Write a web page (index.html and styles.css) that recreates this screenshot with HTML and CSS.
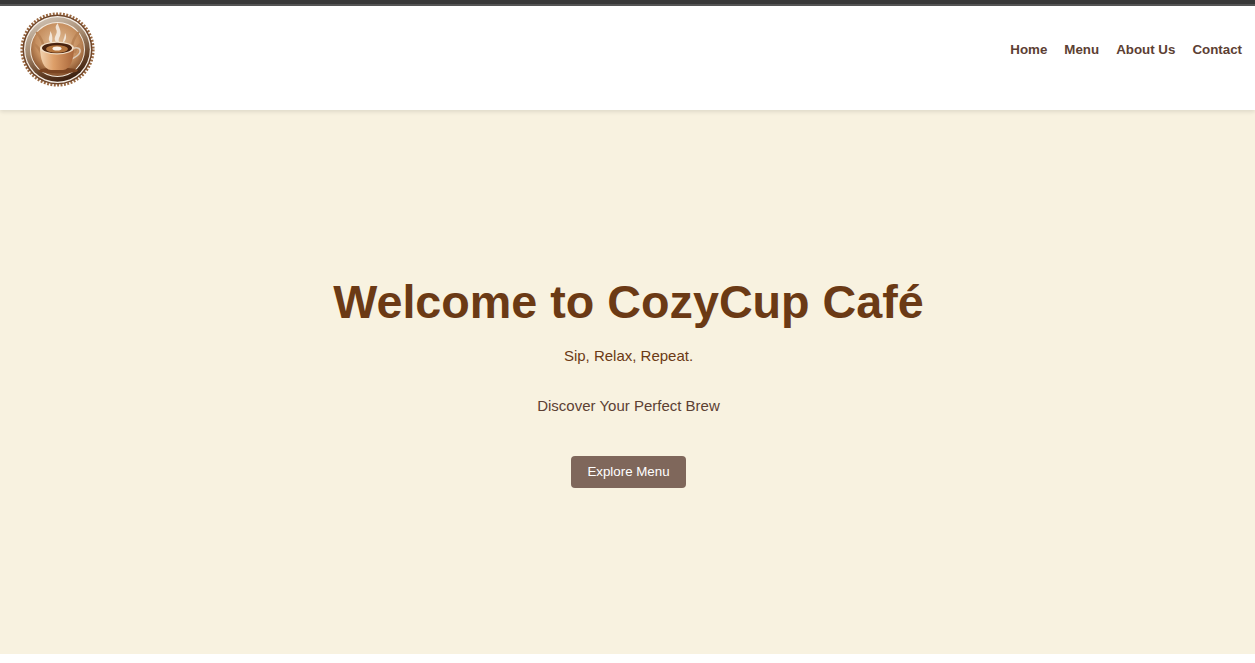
FILE: index.html
```html
<!DOCTYPE html>
<html lang="en">
<head>
<meta charset="utf-8">
<title>CozyCup Café</title>
<link rel="stylesheet" href="styles.css">
</head>
<body>
<div class="topbar"></div>
<header class="site-header">
  <a class="logo" href="#" aria-label="CozyCup Café">
    <svg viewBox="0 0 80 80" width="80" height="80" aria-hidden="true">
      <defs>
        <radialGradient id="bg" cx="50%" cy="40%" r="62%">
          <stop offset="0" stop-color="#e3c09a"/>
          <stop offset="0.65" stop-color="#c68f5f"/>
          <stop offset="1" stop-color="#7d4a27"/>
        </radialGradient>
        <linearGradient id="ring" x1="0.2" y1="0" x2="0.6" y2="1">
          <stop offset="0" stop-color="#d2c6b8"/>
          <stop offset="0.45" stop-color="#a2866b"/>
          <stop offset="0.75" stop-color="#6a452a"/>
          <stop offset="1" stop-color="#3a1f0f"/>
        </linearGradient>
        <linearGradient id="cup" x1="0" y1="0" x2="1" y2="0">
          <stop offset="0" stop-color="#f2d3b0"/>
          <stop offset="0.4" stop-color="#dd9f69"/>
          <stop offset="1" stop-color="#a9663a"/>
        </linearGradient>
      </defs>
      <circle cx="40.500" cy="40.500" r="35.700" fill="none" stroke="#9a6840" stroke-width="2.800" stroke-dasharray="1.900 1.500"/>
      <circle cx="40.500" cy="40.500" r="35" fill="#6e452a"/>
      <circle cx="40.500" cy="40.500" r="33.500" fill="#f6f0e8"/>
      <circle cx="40.500" cy="40.500" r="32.300" fill="url(#ring)"/>
      <circle cx="40.500" cy="40.500" r="27.500" fill="#f3e9dc"/>
      <circle cx="40.500" cy="40.500" r="26.500" fill="url(#bg)"/>
      <path d="M20 24q6 7 7 16M17 35q6 4 8 11M61 24q-5 6-6 13M65 34q-5 3-7 9" fill="none" stroke="#b98355" stroke-width="2.600" stroke-linecap="round"/>
      <ellipse cx="41" cy="61.500" rx="20" ry="3" fill="#7a4421"/>
      <path d="M39 33c-4-5 3-8 0-13c-1-2 0-4 2-6c0 4 4 7 2 13c-1 2-2 4-1 6zM33 33c-3-4 1-7 0-11c2 2 3 7 2 11zM46 33c0-3 2-5 2-9c2 3 1 7-1 9z" fill="#f6efe6" opacity="0.85"/>
      <path d="M54 41c3-3 8-3 9 0c1 4-5 8-11 10" fill="none" stroke="#dccbb8" stroke-width="1.600"/>
      <path d="M23 39h34c0 11-4 22-11 22h-12c-7 0-11-11-11-22z" fill="url(#cup)"/>
      <ellipse cx="40" cy="39" rx="17" ry="6.500" fill="#f3dfc6"/>
      <ellipse cx="40" cy="39" rx="15" ry="5.300" fill="#4a2410"/>
      <ellipse cx="40" cy="40" rx="11" ry="3.800" fill="#b5763f"/>
      <ellipse cx="40" cy="39.500" rx="4.500" ry="2" fill="#fbf1e6"/>
    </svg>
  </a>
  <nav class="main-nav">
    <a href="#">Home</a>
    <a href="#">Menu</a>
    <a href="#">About Us</a>
    <a href="#">Contact</a>
  </nav>
</header>
<main class="hero">
  <h1>Welcome to CozyCup Café</h1>
  <p class="tagline">Sip, Relax, Repeat.</p>
  <p class="subline">Discover Your Perfect Brew</p>
  <a class="cta" href="#">Explore Menu</a>
</main>
</body>
</html>
```
FILE: styles.css
```css
* {
  box-sizing: border-box;
}

html,
body {
  margin: 0;
  padding: 0;
  background: #fff;
}

body {
  font-family: "Liberation Sans", Arial, sans-serif;
  color: #5c4033;
}

.topbar {
  height: 6px;
  background: linear-gradient(#383838 0 4px, #555 4px 6px);
}

.site-header {
  height: 104px;
  padding: 0 13px 18px 17px;
  display: flex;
  justify-content: space-between;
  align-items: center;
  background: #fff;
  box-shadow: 0 2px 4px rgba(0, 0, 0, 0.1);
  position: relative;
}

.logo {
  display: block;
  width: 80px;
  height: 80px;
}

.logo svg {
  display: block;
}

.main-nav {
  display: flex;
  gap: 17px;
}

.main-nav a {
  font-size: 13.330px;
  font-weight: 700;
  color: #5c4033;
  text-decoration: none;
}

.hero {
  height: 544px;
  background: #f8f2e0;
  display: flex;
  flex-direction: column;
  align-items: center;
  justify-content: center;
  text-align: center;
  padding: 0 0 2px 2px;
}

.hero h1 {
  margin: 0 0 17px;
  font-size: 46.700px;
  line-height: 55px;
  color: #6b3a15;
}

.hero p {
  margin: 0 0 33px;
  font-size: 15px;
  line-height: 17px;
  color: #6b3a15;
}

.hero .subline {
  margin-bottom: 42px;
  color: #5c4033;
}

.cta {
  display: block;
  padding: 8px 16px;
  font-size: 13.330px;
  line-height: 16px;
  color: #fff;
  background: #7f675b;
  border-radius: 4px;
  text-decoration: none;
}
```
